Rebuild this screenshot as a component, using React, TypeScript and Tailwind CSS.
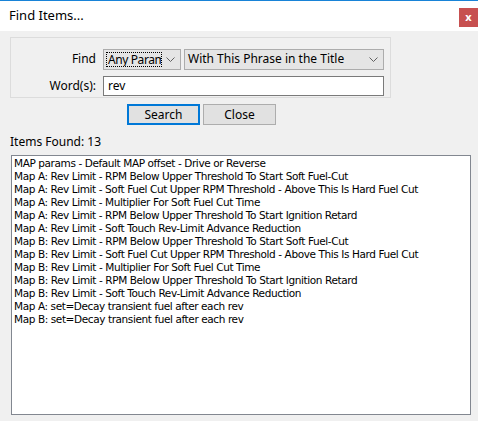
const items = [
  'MAP params - Default MAP offset - Drive or Reverse',
  'Map A: Rev Limit - RPM Below Upper Threshold To Start Soft Fuel-Cut',
  'Map A: Rev Limit - Soft Fuel Cut Upper RPM Threshold - Above This Is Hard Fuel Cut',
  'Map A: Rev Limit - Multiplier For Soft Fuel Cut Time',
  'Map A: Rev Limit - RPM Below Upper Threshold To Start Ignition Retard',
  'Map A: Rev Limit - Soft Touch Rev-Limit Advance Reduction',
  'Map B: Rev Limit - RPM Below Upper Threshold To Start Soft Fuel-Cut',
  'Map B: Rev Limit - Soft Fuel Cut Upper RPM Threshold - Above This Is Hard Fuel Cut',
  'Map B: Rev Limit - Multiplier For Soft Fuel Cut Time',
  'Map B: Rev Limit - RPM Below Upper Threshold To Start Ignition Retard',
  'Map B: Rev Limit - Soft Touch Rev-Limit Advance Reduction',
  'Map A: set=Decay transient fuel after each rev',
  'Map B: set=Decay transient fuel after each rev',
];

const Chevron = () => (
  <svg width="9" height="5" viewBox="0 0 9 5" className="shrink-0">
    <polyline points="0.5,0.5 4.5,4.5 8.5,0.5" fill="none" stroke="#606060" strokeWidth="1" />
  </svg>
);

export default function App() {
  return (
    <div className="w-[478px] h-[421px] flex flex-col bg-[#f0f0f0] text-[12px] text-black font-['Noto_Sans',sans-serif] overflow-hidden">
      {/* Title bar */}
      <div className="h-[31px] shrink-0 bg-white border-t border-[#1883d7] flex items-start justify-between">
        <span className="ml-[9px] mt-[5px] text-[13px] leading-[18px]">Find Items...</span>
        <div className="mt-[7px] w-[19px] h-[19px] bg-[#c75050] flex items-center justify-center text-white text-[11px] font-bold leading-none pb-[2px]">
          x
        </div>
      </div>

      {/* Body */}
      <div className="flex-1 flex flex-col pl-[10px] pt-[6px]">
        {/* Group box */}
        <div className="w-[381px] h-[61px] border border-[#dcdcdc] pt-[9px] grid grid-cols-[85px_281px] gap-x-[7px] gap-y-[3px] items-center">
          <span className="text-right">Find</span>
          <div className="flex gap-[3px]">
            <div className="w-[78px] h-[21px] bg-[#e5e5e5] border border-[#acacac] flex items-center pl-[2px] pr-[5px] gap-[4px]">
              <div className="w-[57px] h-[15px] border border-dotted border-black overflow-hidden whitespace-nowrap leading-[13px] pl-px tracking-[-0.4px]">
                Any Parameter
              </div>
              <Chevron />
            </div>
            <div className="w-[200px] h-[21px] bg-[#e5e5e5] border border-[#acacac] flex items-center justify-between pl-[3px] pr-[5px]">
              <span className="whitespace-nowrap">With This Phrase in the Title</span>
              <Chevron />
            </div>
          </div>
          <span className="text-right">Word(s):</span>
          <div className="w-[281px] h-[20px] bg-white border border-[#7a7a7a] flex items-center pl-[4px]">rev</div>
        </div>

        {/* Buttons */}
        <div className="flex gap-[3px] ml-[117px] mt-[6px]">
          <button className="w-[73px] h-[21px] bg-[#e1e1e1] border-2 border-[#0078d7] flex items-center justify-center leading-none">
            Search
          </button>
          <button className="w-[73px] h-[21px] bg-[#e1e1e1] border border-[#adadad] flex items-center justify-center leading-none">
            Close
          </button>
        </div>

        <div className="mt-[8px] h-[17px] leading-[17px]">Items Found: 13</div>

        {/* Results list */}
        <div className="mt-[5px] ml-px w-[460px] h-[260px] bg-white border border-[#828790] pt-px pl-[2px] font-['DejaVu_Sans',sans-serif] text-[10.5px] leading-[13px] tracking-[-0.4px]">
          {items.map((t, i) => (
            <div key={i} className="whitespace-nowrap">{t}</div>
          ))}
        </div>
      </div>
    </div>
  );
}
